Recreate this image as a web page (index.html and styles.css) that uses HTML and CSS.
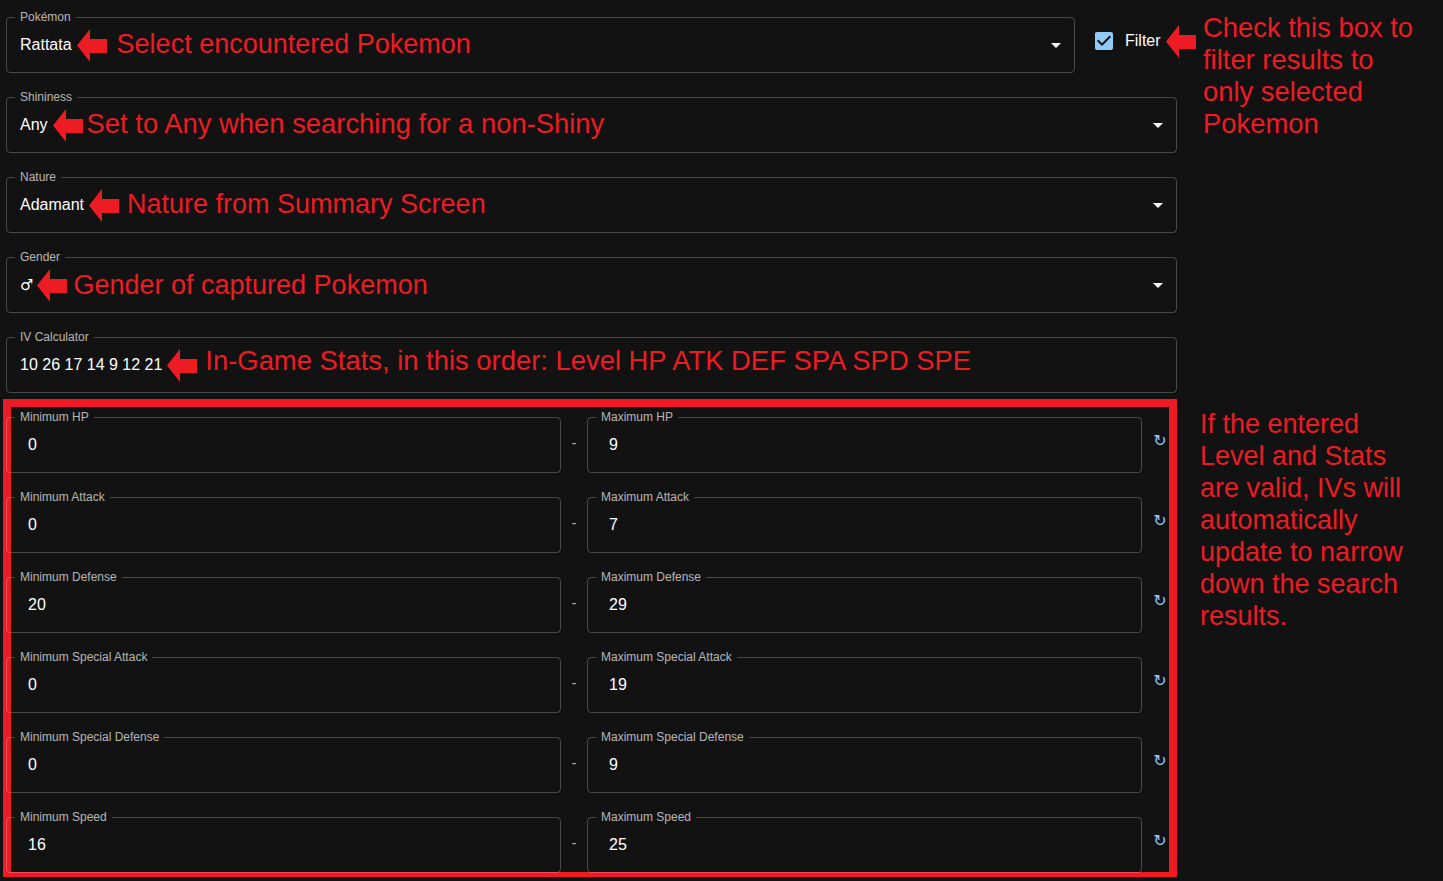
FILE: index.html
```html
<!DOCTYPE html>
<html lang="en">
<head>
<meta charset="utf-8">
<title>IV Search</title>
<link rel="stylesheet" href="styles.css">
</head>
<body>
<div class="page">
  <div class="fields">
    <div class="top-row">
      <div class="field field--pokemon">
        <span class="field__label">Pokémon</span>
        <span class="value">Rattata</span>
        <svg class="arrow" viewBox="0 0 30 33"><polygon points="0,16.5 13,0 13,10 30,10 30,24 13,24 13,33"/></svg>
        <span class="note note--wide">Select encountered Pokemon</span>
        <svg class="caret" viewBox="0 0 24 24"><path d="M7 10l5 5 5-5z"/></svg>
      </div>
      <div class="filter">
        <svg class="checkbox" viewBox="0 0 24 24"><path d="M19 3H5c-1.11 0-2 .9-2 2v14c0 1.1.89 2 2 2h14c1.11 0 2-.9 2-2V5c0-1.1-.89-2-2-2zm-9 14l-5-5 1.41-1.41L10 14.170l7.59-7.59L19 8l-9 9z"/></svg>
        <span class="filter__label">Filter</span>
        <svg class="arrow" viewBox="0 0 30 33"><polygon points="0,16.5 13,0 13,10 30,10 30,24 13,24 13,33"/></svg>
      </div>
    </div>

    <div class="field">
      <span class="field__label">Shininess</span>
      <span class="value">Any</span>
      <svg class="arrow" viewBox="0 0 30 33"><polygon points="0,16.5 13,0 13,10 30,10 30,24 13,24 13,33"/></svg>
      <span class="note note--tight">Set to Any when searching for a non-Shiny</span>
      <svg class="caret" viewBox="0 0 24 24"><path d="M7 10l5 5 5-5z"/></svg>
    </div>

    <div class="field">
      <span class="field__label">Nature</span>
      <span class="value">Adamant</span>
      <svg class="arrow" viewBox="0 0 30 33"><polygon points="0,16.5 13,0 13,10 30,10 30,24 13,24 13,33"/></svg>
      <span class="note">Nature from Summary Screen</span>
      <svg class="caret" viewBox="0 0 24 24"><path d="M7 10l5 5 5-5z"/></svg>
    </div>

    <div class="field">
      <span class="field__label">Gender</span>
      <span class="value value--symbol">♂</span>
      <svg class="arrow arrow--gender" viewBox="0 0 30 33"><polygon points="0,16.5 13,0 13,10 30,10 30,24 13,24 13,33"/></svg>
      <span class="note note--mid">Gender of captured Pokemon</span>
      <svg class="caret" viewBox="0 0 24 24"><path d="M7 10l5 5 5-5z"/></svg>
    </div>

    <div class="field">
      <span class="field__label">IV Calculator</span>
      <span class="value">10 26 17 14 9 12 21</span>
      <svg class="arrow" viewBox="0 0 30 33"><polygon points="0,16.5 13,0 13,10 30,10 30,24 13,24 13,33"/></svg>
      <span class="note note--raised">In-Game Stats, in this order: Level HP ATK DEF SPA SPD SPE</span>
    </div>
  </div>

  <p class="side-note side-note--top">Check this box to<br>filter results to<br>only selected<br>Pokemon</p>

  <div class="stats">
    <div class="stat-row">
      <div class="field field--stat"><span class="field__label">Minimum HP</span><span class="value">0</span></div>
      <span class="dash">-</span>
      <div class="field field--stat"><span class="field__label">Maximum HP</span><span class="value">9</span></div>
      <span class="refresh">↻</span>
    </div>
    <div class="stat-row">
      <div class="field field--stat"><span class="field__label">Minimum Attack</span><span class="value">0</span></div>
      <span class="dash">-</span>
      <div class="field field--stat"><span class="field__label">Maximum Attack</span><span class="value">7</span></div>
      <span class="refresh">↻</span>
    </div>
    <div class="stat-row">
      <div class="field field--stat"><span class="field__label">Minimum Defense</span><span class="value">20</span></div>
      <span class="dash">-</span>
      <div class="field field--stat"><span class="field__label">Maximum Defense</span><span class="value">29</span></div>
      <span class="refresh">↻</span>
    </div>
    <div class="stat-row">
      <div class="field field--stat"><span class="field__label">Minimum Special Attack</span><span class="value">0</span></div>
      <span class="dash">-</span>
      <div class="field field--stat"><span class="field__label">Maximum Special Attack</span><span class="value">19</span></div>
      <span class="refresh">↻</span>
    </div>
    <div class="stat-row">
      <div class="field field--stat"><span class="field__label">Minimum Special Defense</span><span class="value">0</span></div>
      <span class="dash">-</span>
      <div class="field field--stat"><span class="field__label">Maximum Special Defense</span><span class="value">9</span></div>
      <span class="refresh">↻</span>
    </div>
    <div class="stat-row">
      <div class="field field--stat"><span class="field__label">Minimum Speed</span><span class="value">16</span></div>
      <span class="dash">-</span>
      <div class="field field--stat"><span class="field__label">Maximum Speed</span><span class="value">25</span></div>
      <span class="refresh">↻</span>
    </div>
  </div>

  <p class="side-note side-note--bottom">If the entered<br>Level and Stats<br>are valid, IVs will<br>automatically<br>update to narrow<br>down the search<br>results.</p>
</div>
</body>
</html>
```

FILE: styles.css
```css
html, body {
  margin: 0;
  padding: 0;
  background: #121212;
}

body {
  font-family: "Liberation Sans", "DejaVu Sans", Arial, sans-serif;
  color: #ffffff;
  overflow: hidden;
}

.page {
  display: grid;
  grid-template-columns: 1174px 1fr;
  column-gap: 20px;
  row-gap: 9px;
  padding: 17px 0 0 6px;
  align-items: start;
}

.fields {
  display: flex;
  flex-direction: column;
  gap: 24px;
}

.top-row {
  display: flex;
  align-items: flex-start;
}

.field {
  position: relative;
  box-sizing: border-box;
  width: 1171px;
  height: 56px;
  border: 1px solid rgba(255, 255, 255, 0.23);
  border-radius: 4px;
  padding-left: 13px;
  display: flex;
  align-items: center;
  flex-shrink: 0;
}

.field--pokemon {
  width: 1069px;
}

.field__label {
  position: absolute;
  top: -8px;
  left: 8px;
  padding: 0 5px;
  background: #121212;
  font-size: 12px;
  line-height: 14px;
  color: rgba(255, 255, 255, 0.7);
  white-space: nowrap;
}

.value {
  font-size: 16px;
  line-height: 20px;
  color: #ffffff;
  white-space: nowrap;
}

.value--symbol {
  font-family: "DejaVu Sans", sans-serif;
  font-size: 15px;
}

.arrow {
  width: 30px;
  height: 33px;
  margin-left: 5px;
  fill: #ed1c24;
  flex-shrink: 0;
}

.arrow--gender {
  margin-left: 4px;
}

.note {
  margin-left: 8px;
  font-size: 27px;
  line-height: 32px;
  color: #ed1c24;
  white-space: nowrap;
  margin-bottom: 3px;
}

.note--wide { margin-left: 10px; }
.note--tight { margin-left: 4px; font-size: 27.4px; }
.note--mid { margin-left: 6px; margin-bottom: 0; }
.note--raised { margin-bottom: 8px; font-size: 27.4px; }

.caret {
  width: 24px;
  height: 24px;
  fill: #ffffff;
  margin-left: auto;
  margin-right: 6px;
  flex-shrink: 0;
}

.filter {
  display: flex;
  align-items: center;
  height: 48px;
  margin-left: 17px;
  flex-shrink: 0;
}

.checkbox {
  width: 24px;
  height: 24px;
  fill: #90caf9;
}

.filter__label {
  margin-left: 9px;
  font-size: 16px;
  color: #ffffff;
}

.side-note {
  margin: 0;
  font-size: 27px;
  line-height: 32px;
  color: #ed1c24;
  white-space: nowrap;
}

.side-note--top {
  margin: -5px 0 0 3px;
  font-size: 27.4px;
}

.side-note--bottom {
  margin-top: 6px;
}

.stats {
  width: 1168px;
  box-sizing: border-box;
  padding: 15px 0 4px;
  display: flex;
  flex-direction: column;
  gap: 24px;
  outline: 8px solid #ed1c24;
  outline-offset: -5px;
}

.stat-row {
  display: grid;
  grid-template-columns: 555px 26px 555px 1fr;
  align-items: center;
  height: 56px;
}

.field--stat {
  width: 555px;
  padding-left: 21px;
}

.dash {
  text-align: center;
  font-size: 14px;
  color: rgba(255, 255, 255, 0.7);
  margin-bottom: 4px;
}

.refresh {
  text-align: center;
  padding-left: 4px;
  font-family: "DejaVu Sans", sans-serif;
  font-size: 16px;
  line-height: 16px;
  color: #90caf9;
  margin-bottom: 8px;
}
```
